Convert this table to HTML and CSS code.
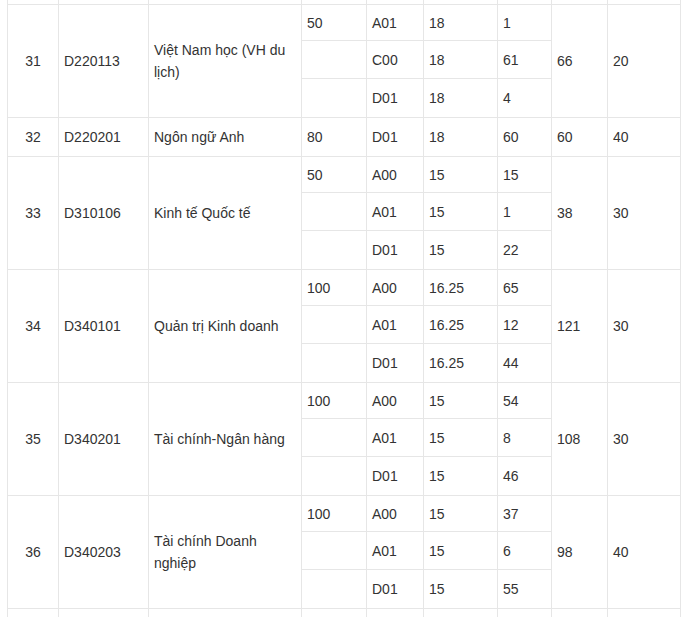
FILE: index.html
```html
<!DOCTYPE html>
<html lang="vi">
<head>
<meta charset="utf-8">
<title>Bảng điểm chuẩn</title>
<link rel="stylesheet" href="styles.css">
</head>
<body>
<table class="grid">
  <colgroup>
    <col class="c1"><col class="c2"><col class="c3"><col class="c4"><col class="c5"><col class="c6"><col class="c7"><col class="c8"><col class="c9">
  </colgroup>
  <tbody>
    <tr class="cut-top"><td></td><td></td><td></td><td></td><td></td><td></td><td></td><td></td><td></td></tr>

    <tr class="s1"><td rowspan="3" class="stt">31</td><td rowspan="3">D220113</td><td rowspan="3">Việt Nam học (VH du lịch)</td><td>50</td><td>A01</td><td>18</td><td>1</td><td rowspan="3">66</td><td rowspan="3">20</td></tr>
    <tr class="s2"><td></td><td>C00</td><td>18</td><td>61</td></tr>
    <tr class="s3"><td></td><td>D01</td><td>18</td><td>4</td></tr>

    <tr class="single"><td class="stt">32</td><td>D220201</td><td>Ngôn ngữ Anh</td><td>80</td><td>D01</td><td>18</td><td>60</td><td>60</td><td>40</td></tr>

    <tr class="s1"><td rowspan="3" class="stt">33</td><td rowspan="3">D310106</td><td rowspan="3">Kinh tế Quốc tế</td><td>50</td><td>A00</td><td>15</td><td>15</td><td rowspan="3">38</td><td rowspan="3">30</td></tr>
    <tr class="s2"><td></td><td>A01</td><td>15</td><td>1</td></tr>
    <tr class="s3"><td></td><td>D01</td><td>15</td><td>22</td></tr>

    <tr class="s1"><td rowspan="3" class="stt">34</td><td rowspan="3">D340101</td><td rowspan="3">Quản trị Kinh doanh</td><td>100</td><td>A00</td><td>16.25</td><td>65</td><td rowspan="3">121</td><td rowspan="3">30</td></tr>
    <tr class="s2"><td></td><td>A01</td><td>16.25</td><td>12</td></tr>
    <tr class="s3"><td></td><td>D01</td><td>16.25</td><td>44</td></tr>

    <tr class="s1"><td rowspan="3" class="stt">35</td><td rowspan="3">D340201</td><td rowspan="3">Tài chính-Ngân hàng</td><td>100</td><td>A00</td><td>15</td><td>54</td><td rowspan="3">108</td><td rowspan="3">30</td></tr>
    <tr class="s2"><td></td><td>A01</td><td>15</td><td>8</td></tr>
    <tr class="s3"><td></td><td>D01</td><td>15</td><td>46</td></tr>

    <tr class="s1"><td rowspan="3" class="stt">36</td><td rowspan="3">D340203</td><td rowspan="3">Tài chính Doanh nghiệp</td><td>100</td><td>A00</td><td>15</td><td>37</td><td rowspan="3">98</td><td rowspan="3">40</td></tr>
    <tr class="s2"><td></td><td>A01</td><td>15</td><td>6</td></tr>
    <tr class="s3"><td></td><td>D01</td><td>15</td><td>55</td></tr>

    <tr class="cut-bottom"><td></td><td></td><td></td><td></td><td></td><td></td><td></td><td></td><td></td></tr>
  </tbody>
</table>
</body>
</html>
```

FILE: styles.css
```css
html, body {
  margin: 0;
  padding: 0;
  background: #ffffff;
  overflow: hidden;
}

.grid {
  margin-left: 7px;
  width: 673px;
  table-layout: fixed;
  border-collapse: collapse;
  font-family: "Liberation Sans", Arial, sans-serif;
  font-size: 14px;
  line-height: 22px;
  color: #333333;
}

.c1 { width: 51px; }
.c2 { width: 90px; }
.c3 { width: 153px; }
.c4 { width: 65px; }
.c5 { width: 57px; }
.c6 { width: 74px; }
.c7 { width: 54px; }
.c8 { width: 56px; }
.c9 { width: 73px; }

.grid td {
  border: 1px solid #e6e6e6;
  padding: 0 5px;
  vertical-align: middle;
  text-align: left;
}

.grid td.stt {
  text-align: center;
}

.grid tr.cut-top td {
  border-top: 0;
  height: 4px;
}

.grid tr.s1 { height: 36px; }
.grid tr.s2 { height: 38px; }
.grid tr.s3 { height: 39px; }
.grid tr.single { height: 39px; }

.grid tr.cut-bottom td {
  height: 20px;
}
```
